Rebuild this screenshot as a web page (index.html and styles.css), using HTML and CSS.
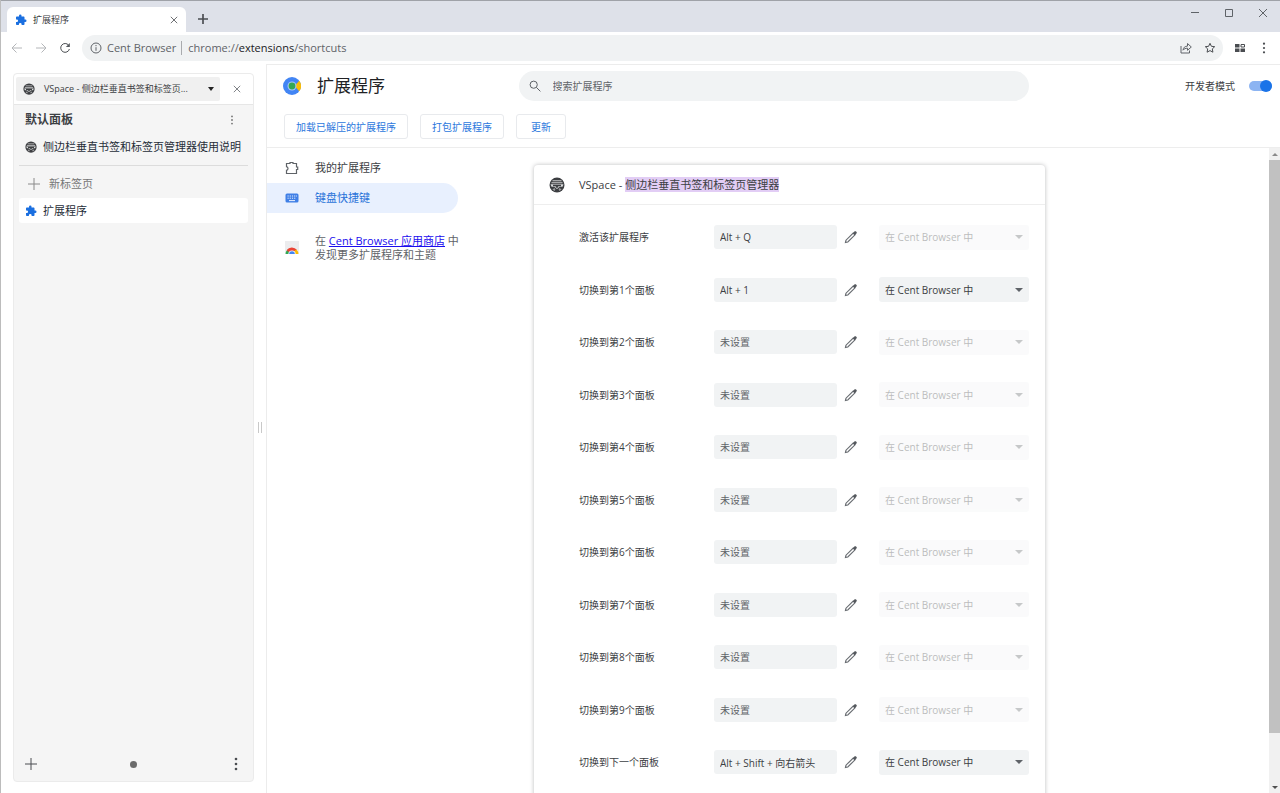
FILE: index.html
```
<!DOCTYPE html>
<html lang="zh-CN">
<head>
<meta charset="utf-8">
<title>扩展程序</title>
<link rel="stylesheet" href="styles.css">
</head>
<body>
<svg class="sprite" aria-hidden="true">
  <symbol id="puzzle" viewBox="0 0 24 24"><path d="M20.5 11H19V7c0-1.100-.9-2-2-2h-4V3.500a2.500 2.500 0 0 0-5 0V5H4c-1.100 0-2 .9-2 2v3.800h1.500a2.700 2.700 0 0 1 0 5.400H2V20c0 1.100.9 2 2 2h3.800v-1.500a2.700 2.700 0 0 1 5.400 0V22H17c1.100 0 2-.9 2-2v-4h1.500a2.500 2.500 0 0 0 0-5z"/></symbol>
  <symbol id="vspace" viewBox="0 0 16 16"><circle cx="8" cy="8" r="7.500" fill="#3c3e41"/><path d="M3.500 3.200h9v1h-9zM2.500 5.300h11v1h-11z" fill="#c9cacc"/><path d="M1.500 7.200h13l-1 2.600h-2.700L8 12l-2.800-2.200H2.500z" fill="#d8d9da"/><path d="M4 7.800h8v1.400H4zM6.400 10l1.600-1.200L9.600 10 8 11z" fill="#3c3e41"/><path d="M3.400 12.600l2-1.600 1 1.300-.8 1.600zM12.600 12.600l-2-1.600-1 1.300.8 1.600z" fill="#9a9b9d"/></symbol>
  <symbol id="close" viewBox="0 0 10 10"><path d="M1 1l8 8M9 1L1 9"/></symbol>
  <symbol id="plus" viewBox="0 0 12 12"><path d="M6 0v12M0 6h12"/></symbol>
  <symbol id="dots" viewBox="0 0 4 14"><circle cx="2" cy="2" r="1.300"/><circle cx="2" cy="7" r="1.300"/><circle cx="2" cy="12" r="1.300"/></symbol>
  <symbol id="pencil" viewBox="0 0 14 14"><path d="M1.500 12.500l.5-2.300 7.200-7.200 1.800 1.800-7.200 7.200z" fill="none" stroke="#6a6e73" stroke-width="1.200"/><path d="M8.800 3.200l1.600-1.600c.6-.6 1.200-.6 1.700-.1l.4.400c.5.500.5 1.100-.1 1.700l-1.600 1.600z" fill="#55595e"/></symbol>
</svg>

<div class="browser">
  <header class="tabstrip">
    <div class="tab">
      <svg class="i12 blue"><use href="#puzzle"/></svg>
      <span class="tab-title">扩展程序</span>
      <button class="icon-btn" aria-label="关闭标签页"><svg class="i8 line strong"><use href="#close"/></svg></button>
    </div>
    <button class="icon-btn new-tab" aria-label="新建标签页"><svg class="i10 line bold"><use href="#plus"/></svg></button>
    <div class="window-controls">
      <button class="icon-btn" aria-label="最小化"><svg class="i10 line" viewBox="0 0 10 10"><path d="M1 4.500h8"/></svg></button>
      <button class="icon-btn" aria-label="最大化"><svg class="i10 line" viewBox="0 0 10 10"><path d="M1.500 1.500h7v7h-7z"/></svg></button>
      <button class="icon-btn" aria-label="关闭"><svg class="i10 line"><use href="#close"/></svg></button>
    </div>
  </header>

  <nav class="toolbar" aria-label="浏览器工具栏">
    <button class="icon-btn" aria-label="后退"><svg class="i12 line faded" viewBox="0 0 12 12"><path d="M11 6H1.500M5.500 1.500L1 6l4.500 4.500"/></svg></button>
    <button class="icon-btn" aria-label="前进"><svg class="i12 line faded" viewBox="0 0 12 12"><path d="M1 6h9.500M6.500 1.500L11 6l-4.500 4.500"/></svg></button>
    <button class="icon-btn" aria-label="刷新"><svg class="i12 line strong" viewBox="0 0 12 12"><path d="M9.600 3.200A4.400 4.400 0 1 0 10.400 7"/><path d="M10.800 1v4h-4z" fill="#55595e" stroke="none"/></svg></button>
    <div class="omnibox">
      <svg class="i12 line" viewBox="0 0 12 12"><circle cx="6" cy="6" r="5"/><path d="M6 5.200v3.600M6 3v1.200"/></svg>
      <span class="origin">Cent Browser</span>
      <span class="url">chrome://<b>extensions</b>/shortcuts</span>
      <button class="icon-btn" aria-label="分享"><svg class="i12 line" viewBox="0 0 12 12"><path d="M1 4v7h8.500V8.500"/><path d="M3 8.200c.3-2.600 1.900-4 4.500-4.100V1.500L11.300 5 7.500 8.300V6.200C5.500 6.200 4.200 6.700 3 8.200z"/></svg></button>
      <button class="icon-btn" aria-label="添加书签"><svg class="i12 line strong" viewBox="0 0 12 12"><path d="M6 1.300l1.400 3 3.300.4-2.400 2.200.6 3.300L6 8.600l-2.900 1.600.6-3.300-2.400-2.200 3.300-.4z"/></svg></button>
    </div>
    <button class="icon-btn" aria-label="扩展"><svg class="i10" viewBox="0 0 10 10"><path d="M0 1h4.500v3.500H0zM0 5.500h4.500V9H0zM5.500 5.500H10V9H5.500z"/><path d="M6 1.500h3.500V4H6z" fill="none" stroke="#4a4d51"/></svg></button>
    <button class="icon-btn" aria-label="菜单"><svg class="dots"><use href="#dots"/></svg></button>
  </nav>

  <div class="workspace">
    <aside class="sidebar">
      <div class="panel">
        <div class="panel-head">
          <button class="panel-picker"><svg class="i12"><use href="#vspace"/></svg><span>VSpace - 侧边栏垂直书签和标签页...</span><i class="caret"></i></button>
          <button class="icon-btn grow" aria-label="关闭侧边栏"><svg class="i8 line"><use href="#close"/></svg></button>
        </div>
        <div class="panel-title"><h2>默认面板</h2><button class="icon-btn" aria-label="面板选项"><svg class="dots small"><use href="#dots"/></svg></button></div>
        <a class="entry" href="#guide"><svg class="i12"><use href="#vspace"/></svg>侧边栏垂直书签和标签页管理器使用说明</a>
        <hr class="rule">
        <button class="entry add"><svg class="i12 line thin"><use href="#plus"/></svg>新标签页</button>
        <a class="entry current" href="#extensions"><svg class="i12 blue"><use href="#puzzle"/></svg>扩展程序</a>
        <div class="panel-foot">
          <button class="icon-btn" aria-label="新建面板"><svg class="i12 line strong"><use href="#plus"/></svg></button>
          <span class="page-dot"></span>
          <button class="icon-btn" aria-label="更多"><svg class="dots tall"><use href="#dots"/></svg></button>
        </div>
      </div>
      <div class="splitter"></div>
    </aside>

    <main class="page">
      <header class="page-head">
        <div class="title-row">
          <div class="brand">
            <svg class="i18" viewBox="0 0 18 18"><circle cx="9" cy="9" r="9" fill="#4285f4"/><path d="M11.500 9l4.800-5.200a9 9 0 0 1 0 10.400z" fill="#fbbc05"/><circle cx="9" cy="9" r="4.500" fill="#a9c8fa"/><circle cx="9" cy="9" r="3.400" fill="#34a853"/></svg>
            <h1>扩展程序</h1>
          </div>
          <label class="search"><svg class="i12 line" viewBox="0 0 12 12"><circle cx="4.700" cy="4.700" r="3.600"/><path d="M7.400 7.400l4 4"/></svg><input type="search" aria-label="搜索扩展程序" placeholder="搜索扩展程序"></label>
          <label class="dev-mode">开发者模式<input type="checkbox" class="switch" checked></label>
        </div>
        <div class="actions"><button>加载已解压的扩展程序</button><button>打包扩展程序</button><button>更新</button></div>
      </header>

      <div class="page-body">
        <div class="columns">
          <nav class="side-nav" aria-label="扩展程序导航">
            <a href="#mine"><svg class="i14 line" viewBox="0 0 14 14"><path d="M1.500 2.500H5V1.500h3v1h3.500V6h1.200v2.500h-1.200v4h-10V9.300c2-.3 2-3.300 0-3.600z" stroke-width="1.200"/></svg>我的扩展程序</a>
            <a href="#keys" class="selected"><svg class="i14" viewBox="0 0 14 14"><rect x=".5" y="2.500" width="13" height="9" rx="1.500" fill="#3f7fe6"/><path d="M2.500 5h1.200M4.700 5h1.200M6.900 5h1.200M9.100 5h1.200M11.200 5h.8M2.500 7.200h1.200M4.700 7.200h1.200M6.900 7.200h1.200M9.100 7.200h1.200M4 9.600h6" stroke="#e8f0fe" fill="none"/></svg>键盘快捷键</a>
            <div class="store">
              <svg class="i14" viewBox="0 0 14 14"><path d="M0 0h14v14H0z" fill="#ececee"/><path d="M.6 13A6.400 6.400 0 0 1 2.600 8.400L6 11v2z" fill="#34a853"/><path d="M1.600 9.300A6.400 6.400 0 0 1 12 9l-3 2.500H4.500z" fill="#ea4335"/><path d="M11.400 8.400a6.400 6.400 0 0 1 2 4.600H8v-2z" fill="#fbbc05"/><path d="M3.400 13a3.600 3.600 0 0 1 7.200 0z" fill="#fff"/><path d="M4.200 13a2.800 2.800 0 0 1 5.600 0z" fill="#4285f4"/><path d="M0 13h14v1H0z" fill="#fff"/></svg>
              <p>在 <a href="#store">Cent Browser 应用商店</a> 中<br>发现更多扩展程序和主题</p>
            </div>
          </nav>

          <section class="card">
            <h3 class="card-head"><svg class="i16"><use href="#vspace"/></svg><span>VSpace - <mark>侧边栏垂直书签和标签页管理器</mark></span></h3>
            <div class="shortcuts">
              <div class="row"><label for="k0">激活该扩展程序</label><input id="k0" readonly value="Alt + Q"><button class="icon-btn" aria-label="编辑"><svg class="i14"><use href="#pencil"/></svg></button><span class="scope"><select disabled aria-label="范围"><option>在 Cent Browser 中</option></select></span></div>
              <div class="row"><label for="k1">切换到第1个面板</label><input id="k1" readonly value="Alt + 1"><button class="icon-btn" aria-label="编辑"><svg class="i14"><use href="#pencil"/></svg></button><span class="scope"><select aria-label="范围"><option>在 Cent Browser 中</option></select></span></div>
              <div class="row"><label for="k2">切换到第2个面板</label><input id="k2" readonly placeholder="未设置"><button class="icon-btn" aria-label="编辑"><svg class="i14"><use href="#pencil"/></svg></button><span class="scope"><select disabled aria-label="范围"><option>在 Cent Browser 中</option></select></span></div>
              <div class="row"><label for="k3">切换到第3个面板</label><input id="k3" readonly placeholder="未设置"><button class="icon-btn" aria-label="编辑"><svg class="i14"><use href="#pencil"/></svg></button><span class="scope"><select disabled aria-label="范围"><option>在 Cent Browser 中</option></select></span></div>
              <div class="row"><label for="k4">切换到第4个面板</label><input id="k4" readonly placeholder="未设置"><button class="icon-btn" aria-label="编辑"><svg class="i14"><use href="#pencil"/></svg></button><span class="scope"><select disabled aria-label="范围"><option>在 Cent Browser 中</option></select></span></div>
              <div class="row"><label for="k5">切换到第5个面板</label><input id="k5" readonly placeholder="未设置"><button class="icon-btn" aria-label="编辑"><svg class="i14"><use href="#pencil"/></svg></button><span class="scope"><select disabled aria-label="范围"><option>在 Cent Browser 中</option></select></span></div>
              <div class="row"><label for="k6">切换到第6个面板</label><input id="k6" readonly placeholder="未设置"><button class="icon-btn" aria-label="编辑"><svg class="i14"><use href="#pencil"/></svg></button><span class="scope"><select disabled aria-label="范围"><option>在 Cent Browser 中</option></select></span></div>
              <div class="row"><label for="k7">切换到第7个面板</label><input id="k7" readonly placeholder="未设置"><button class="icon-btn" aria-label="编辑"><svg class="i14"><use href="#pencil"/></svg></button><span class="scope"><select disabled aria-label="范围"><option>在 Cent Browser 中</option></select></span></div>
              <div class="row"><label for="k8">切换到第8个面板</label><input id="k8" readonly placeholder="未设置"><button class="icon-btn" aria-label="编辑"><svg class="i14"><use href="#pencil"/></svg></button><span class="scope"><select disabled aria-label="范围"><option>在 Cent Browser 中</option></select></span></div>
              <div class="row"><label for="k9">切换到第9个面板</label><input id="k9" readonly placeholder="未设置"><button class="icon-btn" aria-label="编辑"><svg class="i14"><use href="#pencil"/></svg></button><span class="scope"><select disabled aria-label="范围"><option>在 Cent Browser 中</option></select></span></div>
              <div class="row"><label for="k10">切换到下一个面板</label><input id="k10" readonly value="Alt + Shift + 向右箭头"><button class="icon-btn" aria-label="编辑"><svg class="i14"><use href="#pencil"/></svg></button><span class="scope"><select aria-label="范围"><option>在 Cent Browser 中</option></select></span></div>
            </div>
          </section>
        </div>
        <div class="scrollbar" aria-hidden="true"><i class="arrow up"></i><i class="thumb"></i><i class="track"></i><i class="arrow down"></i></div>
      </div>
    </main>
  </div>
</div>
</body>
</html>
```
FILE: styles.css
```
* { box-sizing: border-box; }

body {
  margin: 0;
  font: 10px/14px "Open Sans", "Noto Sans CJK SC", sans-serif;
  color: #3c4043;
  background: #fff;
}

button, input, select { font: inherit; color: inherit; margin: 0; }
button { padding: 0; border: 0; background: none; }
h1, h2, h3, p { margin: 0; font-size: inherit; font-weight: 400; }
a { color: inherit; text-decoration: none; }
svg { flex: none; fill: #4a4d51; }

.sprite { display: none; }
.i8 { width: 8px; height: 8px; }
.i10 { width: 10px; height: 10px; }
.i12 { width: 12px; height: 12px; }
.i14 { width: 14px; height: 14px; }
.i16 { width: 16px; height: 16px; }
.i18 { width: 18px; height: 18px; }
.line { fill: none; stroke: #5f6368; }
.strong { stroke: #4a4d51; }
.bold { stroke: #4a4d51; stroke-width: 2px; }
.faded { stroke: #b4b6b9; }
.thin { stroke: #8a8a8a; }
.blue { fill: #1a6fe0; }
.dots { width: 4px; height: 12px; }
.dots.small { height: 10px; fill: #777; }
.dots.tall { height: 14px; }

.icon-btn {
  display: flex;
  align-items: center;
  justify-content: center;
  flex: none;
  width: 24px;
  height: 24px;
}
.icon-btn.grow { flex: 1; }

.browser {
  display: flex;
  flex-direction: column;
  height: 100vh;
  overflow: hidden;
  border-left: 1px solid #bcbcbc;
}

.tabstrip {
  display: flex;
  flex: none;
  height: 32px;
  padding-left: 6px;
  border-top: 1px solid #9fa2a8;
  background: #dee1e9;
}
.tab {
  display: flex;
  align-items: center;
  gap: 6px;
  width: 179px;
  margin-top: 6px;
  padding-left: 8px;
  border-radius: 6px 6px 0 0;
  background: #fff;
}
.tab-title { flex: 1; font-size: 9px; }
.new-tab { margin: 6px 0 0 5px; }
.window-controls { display: flex; gap: 10px; margin-left: auto; padding-right: 5px; }

.toolbar {
  display: flex;
  align-items: center;
  flex: none;
  height: 32px;
  padding: 0 4px;
}
.omnibox {
  display: flex;
  align-items: center;
  flex: 1;
  height: 26px;
  margin: 0 5px;
  padding: 0 1px 0 8px;
  border-radius: 13px;
  background: #f0f2f3;
  font-size: 11px;
  color: #5f6368;
}
.origin { margin-left: 5px; padding-right: 5px; border-right: 1px solid #a9abae; }
.url { flex: 1; margin-left: 6px; }
.url b { font-weight: 400; color: #202124; }

.workspace { display: flex; flex: 1; min-height: 0; }

.sidebar {
  display: flex;
  flex: none;
  width: 265px;
  padding: 9px 0 11px 12px;
}
.panel {
  display: flex;
  flex-direction: column;
  flex: 1;
  border: 1px solid #ebebeb;
  border-radius: 4px;
  background: #f5f5f5;
}
.panel-head {
  display: flex;
  align-items: center;
  height: 31px;
  padding-left: 2px;
  border-bottom: 1px solid #e6e6e6;
  border-radius: 4px 4px 0 0;
  background: #fff;
}
.panel-picker {
  display: flex;
  align-items: center;
  gap: 9px;
  width: 204px;
  height: 24px;
  padding: 0 6px 0 7px;
  border-radius: 2px;
  background: #f0f0f0;
  font-size: 9px;
}
.panel-picker span { flex: 1; text-align: left; white-space: nowrap; }
.caret { border: 3px solid transparent; border-top: 4px solid #222; border-bottom: 0; }
.panel-title {
  display: flex;
  align-items: center;
  justify-content: space-between;
  height: 29px;
  padding: 0 9px 0 11px;
}
.panel-title h2 { font-size: 12px; font-weight: 700; }
.entry {
  display: flex;
  align-items: center;
  gap: 6px;
  height: 25px;
  margin: 0 5px;
  padding-left: 6px;
  border-radius: 3px;
  font-size: 11px;
  white-space: nowrap;
  color: #262d38;
}
.entry.add { gap: 9px; padding-left: 9px; color: #777; }
.entry.current { margin-top: 2px; background: #fff; }
.rule { width: auto; height: 1px; margin: 6px 5px 5px; border: 0; background: #dcdcdc; }
.panel-foot {
  display: flex;
  align-items: center;
  justify-content: space-between;
  margin-top: auto;
  padding: 0 5px 5px;
}
.page-dot { width: 7px; height: 7px; border-radius: 50%; background: #6b6b6b; }
.splitter {
  align-self: center;
  width: 4px;
  height: 11px;
  margin: 0 4px;
  border: solid #c9c9c9;
  border-width: 0 1px;
}

.page {
  display: flex;
  flex-direction: column;
  flex: 1;
  min-width: 0;
  border: solid #ececec;
  border-width: 1px 0 0 1px;
}
.page-head { flex: none; height: 83px; border-bottom: 1px solid #ededed; }
.title-row {
  display: grid;
  grid-template-columns: 1fr 510px 1fr;
  align-items: center;
  height: 42px;
}
.brand { display: flex; align-items: center; gap: 16px; padding-left: 16px; }
.brand h1 { font-size: 17px; line-height: 24px; color: #202124; }
.search {
  display: flex;
  align-items: center;
  gap: 12px;
  height: 30px;
  padding: 0 10px;
  border-radius: 15px;
  background: #f1f3f4;
}
.search input { flex: 1; padding: 0; border: 0; outline: 0; background: none; }
.search input::placeholder { color: #5f6368; }
.dev-mode { display: flex; align-items: center; justify-content: flex-end; gap: 14px; padding-right: 8px; }
.switch {
  display: flex;
  align-items: center;
  justify-content: flex-end;
  width: 23px;
  height: 10px;
  appearance: none;
  border-radius: 5px;
  background: #8cb4f2;
}
.switch::before { content: ""; width: 12px; height: 12px; border-radius: 50%; background: #1a73e8; }
.actions { display: flex; gap: 12px; padding: 7px 0 0 17px; }
.actions button {
  height: 25px;
  padding: 0 11px;
  border: 1px solid #e8eaed;
  border-radius: 3px;
  color: #2b77dd;
}
.actions button:last-child { padding: 0 14px; }

.page-body { display: flex; flex: 1; min-height: 0; }
.columns {
  display: grid;
  grid-template-columns: 191px 1fr 511px 3fr;
  flex: 1;
  align-items: start;
  height: 100%;
  overflow: hidden;
}
.side-nav { padding-top: 5px; font-size: 11px; }
.side-nav > a {
  display: flex;
  align-items: center;
  gap: 16px;
  height: 30px;
  padding-left: 18px;
  border-radius: 0 15px 15px 0;
}
.side-nav > .selected { background: #e8f0fe; color: #2a73d9; }
.store { display: flex; align-items: center; gap: 16px; padding: 21px 0 0 18px; color: #5f6368; white-space: nowrap; }
.store a { color: #1a0dee; text-decoration: underline; }

.card {
  grid-column: 3;
  margin: 17px -1px 0 1px;
  border-radius: 4px;
  background: #fff;
  box-shadow: 0 0 4px rgba(60, 64, 67, .35);
}
.card-head {
  display: flex;
  align-items: center;
  gap: 14px;
  height: 40px;
  padding-left: 15px;
  border-bottom: 1px solid #eee;
  font-size: 11px;
}
.card-head mark { background: #e2cdf5; color: inherit; }
.shortcuts { display: grid; grid-auto-rows: 52px 53px; padding: 6px 16px 20px 45px; }
.row {
  display: grid;
  grid-template-columns: 1fr 123px 42px 150px;
  align-items: center;
}
.row .icon-btn { width: 27px; }
.row input {
  height: 24px;
  min-width: 0;
  padding: 0 6px;
  border: 0;
  border-radius: 3px;
  background: #f1f3f4;
}
.row input::placeholder { color: #5f6368; }
.scope { display: grid; align-items: center; }
.scope:has(:disabled) { opacity: .35; }
.scope select, .scope::after { grid-area: 1 / 1; }
.scope select {
  height: 25px;
  padding: 0 6px;
  appearance: none;
  border: 0;
  border-radius: 3px;
  background: #f1f3f4;
  opacity: 1;
}
.scope::after {
  content: "";
  justify-self: end;
  margin-right: 6px;
  border: 4px solid transparent;
  border-top-color: #5f6368;
  border-bottom: 0;
  pointer-events: none;
  z-index: 1;
}

.scrollbar { display: flex; flex-direction: column; flex: none; width: 11px; background: #f1f1f1; }
.thumb { flex: 12; background: #c1c1c1; }
.track { flex: 1; }
.arrow { height: 12px; display: flex; align-items: center; justify-content: center; }
.arrow::before { content: ""; border: 3px solid transparent; }
.arrow.up::before { border-bottom-color: #8a8a8a; border-top: 0; }
.arrow.down::before { border-top-color: #505050; border-bottom: 0; }
```
